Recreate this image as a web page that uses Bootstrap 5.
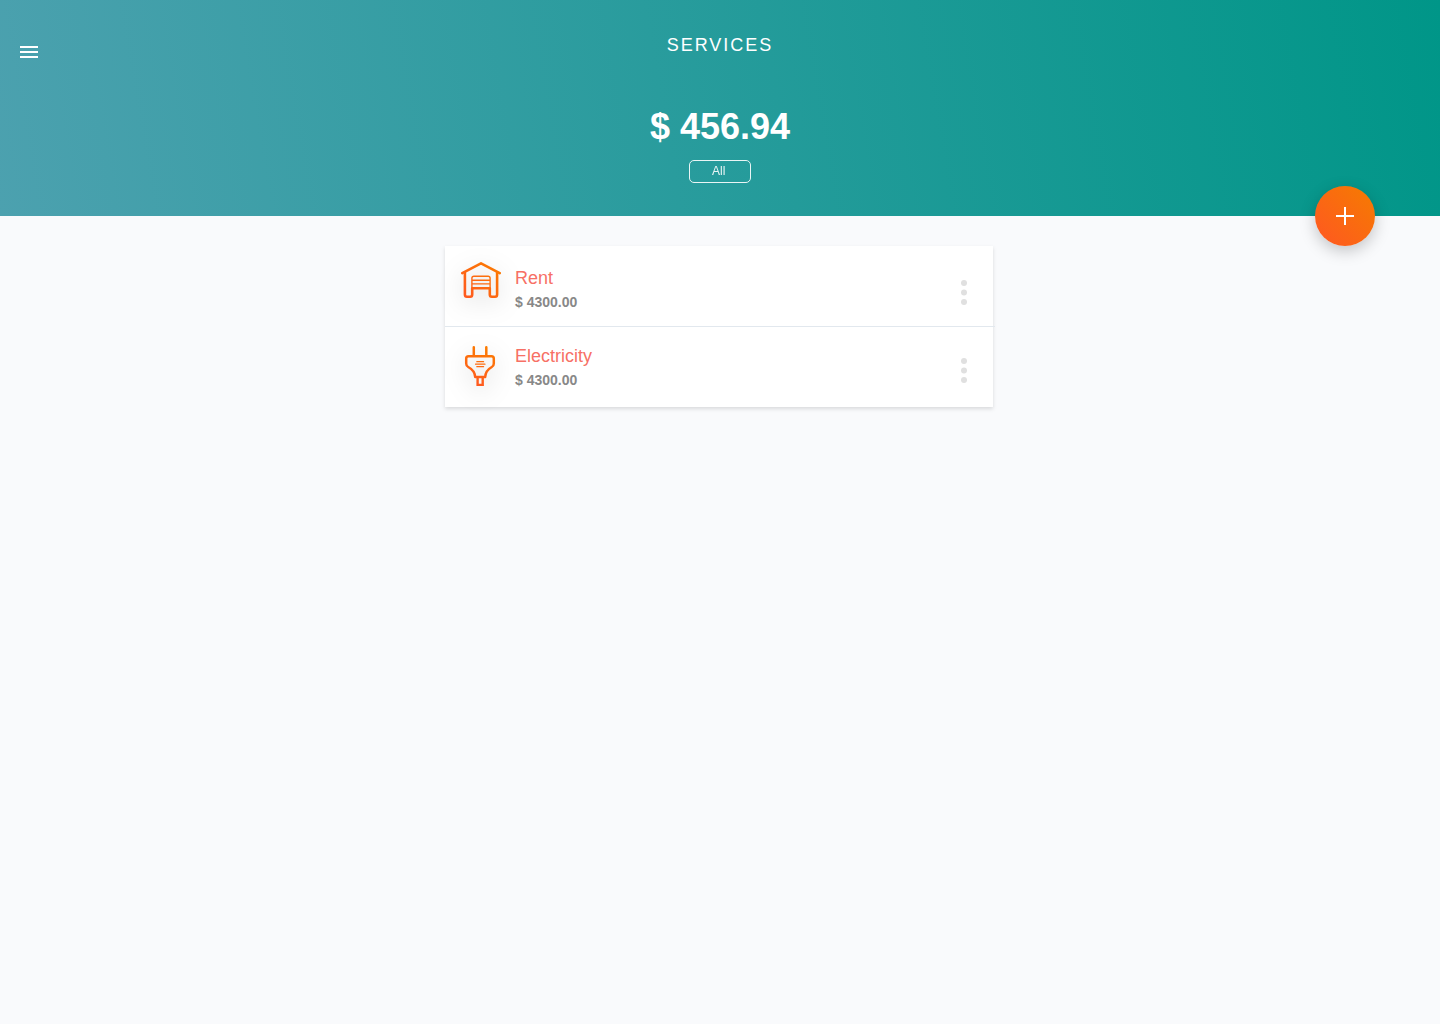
<!DOCTYPE html>
<html lang="en">
<head>
<meta charset="utf-8">
<meta name="viewport" content="width=device-width, initial-scale=1">
<title>Services</title>
<link href="https://cdn.jsdelivr.net/npm/bootstrap@5.3.0/dist/css/bootstrap.min.css" rel="stylesheet">
<style>
  body { background: #f9fafc; font-family: "Liberation Sans", Arial, sans-serif; }
  .top-panel { height: 216px; background: linear-gradient(80deg, #4ca1af, #009688); padding-top: 34px; }
  .menu-toggle { top: 43px; left: 20px; line-height: 0; }
  .page-title { font-size: 18px; line-height: 22px; letter-spacing: 2px; font-weight: 400; }
  .total { font-size: 36px; line-height: 40px; margin-top: 51px; }
  .period { appearance: none; width: 62px; height: 23px; margin-top: 13px; padding: 0 0 2px 22px; font-size: 12px; line-height: 18px; color: #fff; background: transparent; border: 1px solid #fff; border-radius: 5px; opacity: .9; }
  .period option { color: #333; }
  .add-btn { right: 65px; bottom: -30px; width: 60px; height: 60px; background: linear-gradient(45deg, #ff5722, #f57c00); box-shadow: 0 5px 16px rgba(0, 0, 0, .22); }
  .services { max-width: 550px; padding: 30px 2px 30px 0; }
  .service-list { background: #fff; box-shadow: 0 2px 4px rgba(0, 0, 0, .13); }
  .service { height: 80px; padding: 14px 26px 0 16px; }
  .divider { height: 1px; margin-right: -2px; background: #e2e8ee; }
  .service-icon { width: 40px; height: 48px; filter: drop-shadow(0 6px 12px rgba(0, 0, 0, .2)); }
  .service-text { margin-left: 14px; padding-top: 4px; }
  .service-first .service-text, .service-first .more { margin-top: 3px; }
  .service-name { font-size: 18px; line-height: 22px; font-weight: 400; color: #f77065; }
  .service-cost { font-size: 14px; line-height: 18px; margin-top: 4px; color: #888; }
  .more { line-height: 0; padding-top: 16px; }
</style>
<script src="https://cdn.jsdelivr.net/npm/bootstrap@5.3.0/dist/js/bootstrap.bundle.min.js" defer></script>
</head>
<body>
<svg class="position-absolute" width="0" height="0" aria-hidden="true">
  <defs>
    <linearGradient id="flame" gradientUnits="userSpaceOnUse" x1="4" y1="42" x2="38" y2="4">
      <stop offset="0" stop-color="#ff5722"/><stop offset="1" stop-color="#fb7c00"/>
    </linearGradient>
    <linearGradient id="flame-plug" gradientUnits="userSpaceOnUse" x1="12" y1="46" x2="28" y2="6">
      <stop offset="0" stop-color="#ff5722"/><stop offset="1" stop-color="#fb7c00"/>
    </linearGradient>
  </defs>
</svg>

<header class="top-panel position-relative d-flex flex-column align-items-center text-white">
  <button type="button" class="menu-toggle position-absolute border-0 bg-transparent p-0" aria-label="Menu">
    <svg width="18" height="18" viewBox="0 0 18 18" fill="#fff" aria-hidden="true"><path d="M0 3h18v2H0zM0 8h18v2H0zM0 13h18v2H0z"/></svg>
  </button>
  <h1 class="page-title mb-0">SERVICES</h1>
  <div class="total fw-bold">$ 456.94</div>
  <select class="period d-block" aria-label="Period">
    <option selected>All</option>
    <option>Month</option>
  </select>
  <button type="button" class="add-btn position-absolute d-flex align-items-center justify-content-center rounded-circle border-0 p-0" aria-label="Add service">
    <svg width="18" height="18" viewBox="0 0 18 18" fill="#fff" aria-hidden="true"><path d="M8 0h2v8h8v2h-8v8H8v-8H0V8h8z"/></svg>
  </button>
</header>

<main class="services mx-auto">
  <ul class="service-list list-unstyled mb-0">
    <li>
      <div class="service service-first d-flex align-items-start">
        <svg class="service-icon flex-shrink-0" viewBox="0 0 40 48" fill="none" stroke="url(#flame)" stroke-linejoin="round" stroke-linecap="round" aria-hidden="true">
          <path stroke-width="2.6" d="M1.300 13.200 20 3.300 38.700 13.200"/>
          <path stroke-width="2.600" d="M3.900 12.500V34.600q0 2.200 2 2.200h3.300q2 0 2-2.200V28.300h17.600v6.300q0 2.200 2 2.200h3.300q2 0 2-2.200V12.500"/>
          <path stroke-width="1.400" d="M10.900 28V18.300q0-2 2-2h14.200q2 0 2 2V28M11.300 20.200h17.400M11.300 23.900h17.400"/>
        </svg>
        <div class="service-text flex-grow-1">
          <h2 class="service-name mb-0">Rent</h2>
          <div class="service-cost fw-bold">$ 4300.00</div>
        </div>
        <button type="button" class="more border-0 bg-transparent px-0 pb-0" aria-label="Rent options">
          <svg width="6" height="26" viewBox="0 0 6 26" fill="#e0e0e0" aria-hidden="true"><circle cx="3" cy="4" r="3"/><circle cx="3" cy="13.500" r="3"/><circle cx="3" cy="23" r="3"/></svg>
        </button>
      </div>
      <div class="divider"></div>
    </li>
    <li class="service d-flex align-items-start">
      <svg class="service-icon flex-shrink-0" viewBox="0 0 40 48" fill="none" stroke="url(#flame-plug)" stroke-linejoin="round" aria-hidden="true">
        <path stroke-width="2.500" stroke-linecap="round" d="M12.800 6.300V14.500M25.300 6.300V14.500"/>
        <path stroke-width="2.500" d="M7.500 15.200H30.500Q32.800 15.200 32.800 17.500V22.500Q32.800 25 30.800 26Q24.500 29.500 24.200 36H14.200Q13.800 29.500 7.200 26Q5.200 25 5.200 22.500V17.500Q5.200 15.200 7.500 15.200Z"/>
        <path stroke-width="2.400" stroke-linejoin="miter" d="M16.600 36.500V43.900H21.700V36.500"/>
        <path stroke-width="1.200" stroke-linecap="round" d="M15.800 20.700h6.800M14.500 23.200h9.500M15.800 25.700h6.800"/>
      </svg>
      <div class="service-text flex-grow-1">
        <h2 class="service-name mb-0">Electricity</h2>
        <div class="service-cost fw-bold">$ 4300.00</div>
      </div>
      <button type="button" class="more border-0 bg-transparent px-0 pb-0" aria-label="Electricity options">
        <svg width="6" height="26" viewBox="0 0 6 26" fill="#e0e0e0" aria-hidden="true"><circle cx="3" cy="4" r="3"/><circle cx="3" cy="13.500" r="3"/><circle cx="3" cy="23" r="3"/></svg>
      </button>
    </li>
  </ul>
</main>
</body>
</html>
